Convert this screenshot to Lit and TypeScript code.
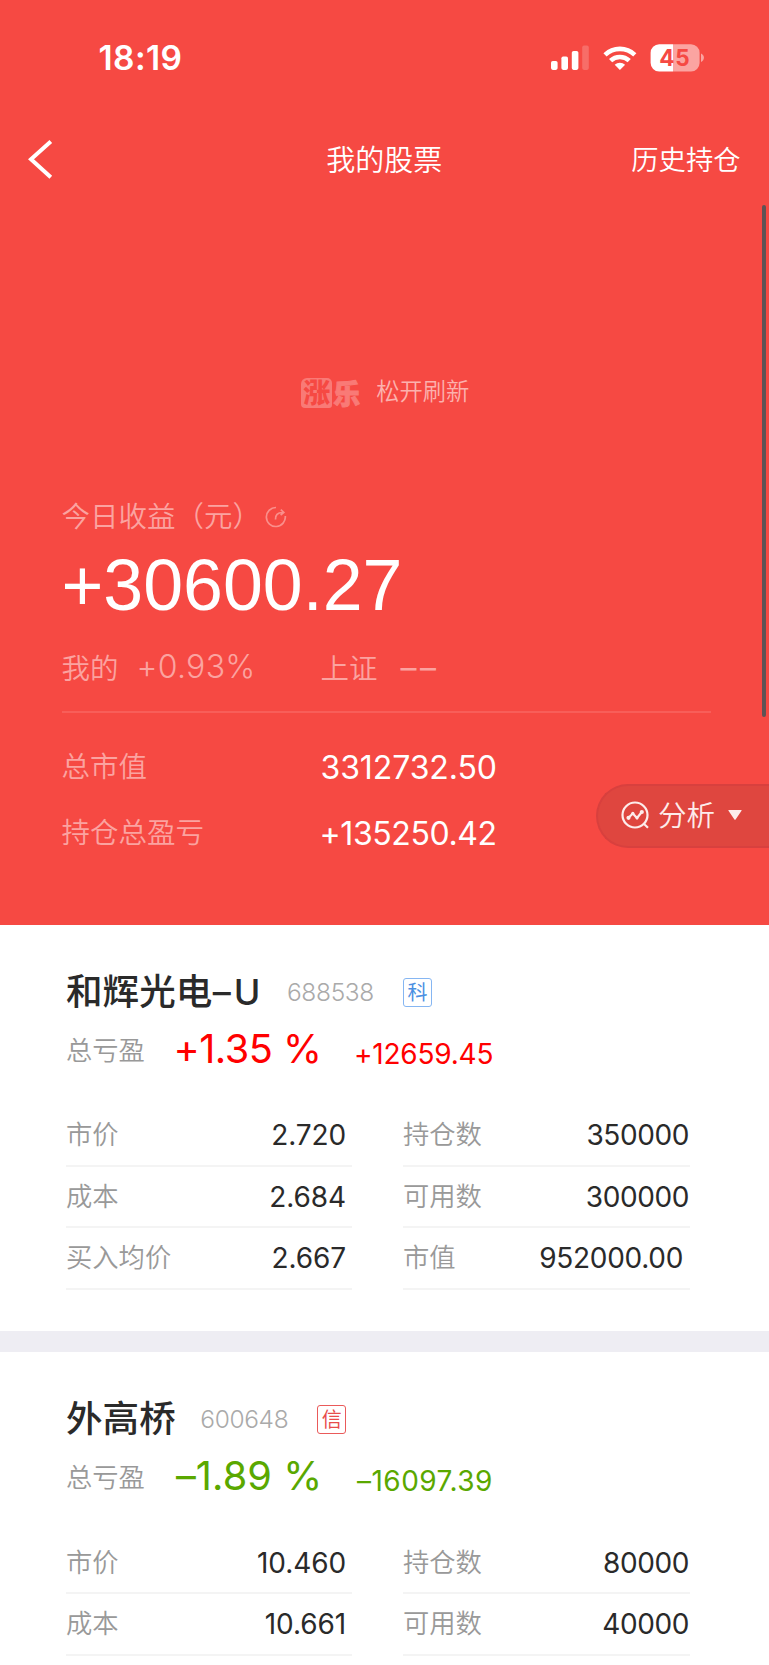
import { LitElement, html, css } from 'lit';
import { customElement, property } from 'lit/decorators.js';
import { classMap } from 'lit/directives/class-map.js';

interface Field {
  label: string;
  value: string;
  kind: 'price' | 'count' | 'money';
}

interface Holding {
  name: string;
  suffix?: string;
  code: string;
  tag: string;
  tagTone: 'blue' | 'red';
  rate: string;
  amount: string;
  up: boolean;
  fields: Field[];
}

const HOLDINGS: Holding[] = [
  {
    name: '和辉光电', suffix: '–U', code: '688538', tag: '科', tagTone: 'blue',
    rate: '+1.35 %', amount: '+12659.45', up: true,
    fields: [
      { label: '市价', value: '2.720', kind: 'price' },
      { label: '持仓数', value: '350000', kind: 'count' },
      { label: '成本', value: '2.684', kind: 'price' },
      { label: '可用数', value: '300000', kind: 'count' },
      { label: '买入均价', value: '2.667', kind: 'price' },
      { label: '市值', value: '952000.00', kind: 'money' },
    ],
  },
  {
    name: '外高桥', code: '600648', tag: '信', tagTone: 'red',
    rate: '–1.89 %', amount: '–16097.39', up: false,
    fields: [
      { label: '市价', value: '10.460', kind: 'price' },
      { label: '持仓数', value: '80000', kind: 'count' },
      { label: '成本', value: '10.661', kind: 'price' },
      { label: '可用数', value: '40000', kind: 'count' },
    ],
  },
];

@customElement('status-bar')
export class StatusBar extends LitElement {
  static styles = css`
    :host { display: flex; align-items: center; height: 115px; padding: 0 65px 0 98.5px; box-sizing: border-box; color: #fff; }
    .time { font: 600 33.5px/40px Inter, sans-serif; letter-spacing: 0.4px; }
    svg { display: block; margin-left: auto; }
    .level { font: 700 22.5px Inter, sans-serif; fill: #f64943; letter-spacing: 0.8px; }
  `;
  render() {
    return html`
      <span class="time">18:19</span>
      <svg width="153" height="28" viewBox="551 43.4 153 28" fill="#fff">
        <rect x="551" y="60.3" width="6.6" height="9" rx="1.8" />
        <rect x="561.4" y="55.8" width="6.6" height="13.5" rx="1.8" />
        <rect x="571.8" y="50.3" width="6.6" height="19" rx="1.8" />
        <rect x="582.2" y="45" width="6.6" height="24.3" rx="1.8" opacity=".2" />
        <g fill="none" stroke="#fff" stroke-width="4.6">
          <path d="M605 54.2a21.6 21.6 0 0 1 29.8 0" />
          <path d="M610.6 60.1a13.4 13.4 0 0 1 18.6 0" />
        </g>
        <path d="M619.9 69.4l-5.2-5.3a7.6 7.6 0 0 1 10.4 0z" />
        <clipPath id="shell"><rect x="650.6" y="43.6" width="49" height="27.4" rx="8.6" /></clipPath>
        <g clip-path="url(#shell)">
          <rect x="650" y="43" width="23" height="29" />
          <rect x="673" y="43" width="27" height="29" opacity=".5" />
        </g>
        <path d="M701 53c1.8.8 2.9 2.3 2.9 4.2s-1.1 3.5-2.9 4.2z" opacity=".5" />
        <text class="level" x="659.2" y="65.4">45</text>
      </svg>
    `;
  }
}

@customElement('nav-bar')
export class NavBar extends LitElement {
  static styles = css`
    :host { display: grid; grid-template-columns: 1fr auto 1fr; align-items: center; height: 85px; padding: 0 28.5px 0 28px; color: #fff;
      font-family: "Noto Sans CJK SC", sans-serif; font-weight: 350; }
    svg { display: block; margin: 3px 0 0 -1px; }
    .title { font-size: 29px; line-height: 40px; }
    .history { font-size: 27.3px; line-height: 40px; text-align: right; }
  `;
  render() {
    return html`
      <svg width="28" height="42" viewBox="27 138 28 42" fill="none" stroke="#fff" stroke-width="4">
        <path d="M50.8 141.4 31 159.2 50.8 177.2" />
      </svg>
      <span class="title">我的股票</span>
      <span class="history">历史持仓</span>
    `;
  }
}

@customElement('profit-panel')
export class ProfitPanel extends LitElement {
  static styles = css`
    :host { display: block; padding: 175px 58px 61px 61.5px; color: #fff; font: 350 28.5px/40px "Noto Sans CJK SC", sans-serif; }
    .refresh { display: flex; align-items: center; justify-content: center; gap: 15px; height: 30px; margin-left: -2px; font-size: 23.3px; color: #fcb1ae; }
    .logo { display: flex; align-items: center; gap: 1px; margin-top: 6px; font-weight: 900; line-height: 30px; }
    .seal { width: 31px; height: 30px; border-radius: 6px 5px 3px 4px; background: #f97a76; color: #f64943; font-size: 27px; line-height: 28px; text-align: center; }
    .script { width: 28px; color: #f97a76; font-size: 27px; line-height: 28px; -webkit-text-stroke: 1px #f97a76; }
    .today { display: flex; align-items: center; height: 40px; margin-top: 89.5px; color: #fba3a0; }
    .today svg { display: block; margin: 4px 0 0 3.5px; }
    .total { height: 72px; margin-top: 14px; font: 400 71.7px/72px "Liberation Sans", Arial, sans-serif; }
    .compare { display: grid; grid-template-columns: 259px 1fr; height: 40px; margin-top: 25.5px; padding-bottom: 25px;
      border-bottom: 2px solid #f85e59; color: #fba3a0; }
    .compare > div { display: flex; align-items: center; }
    .rate { margin-left: 18px; font: 300 32px/40px Inter, sans-serif; letter-spacing: 0.3px; }
    .none { margin-left: 23px; padding-top: 2px; font: 400 32px/40px Inter, sans-serif; letter-spacing: 3.4px; }
    .sums { display: grid; grid-template-columns: 259px 1fr; grid-auto-rows: 66px; align-items: center; margin-top: 18.5px; }
    .sums .label { color: #fba3a0; }
    .sums .value { padding-top: 7px; font: 400 32px/40px Inter, sans-serif; letter-spacing: -0.1px; }
    .sums .gain { letter-spacing: -0.4px; margin-left: -1px; }
  `;
  render() {
    return html`
      <div class="refresh">
        <div class="logo"><span class="seal">涨</span><span class="script">乐</span></div>
        <span>松开刷新</span>
      </div>
      <div class="today">
        <span>今日收益（元）</span>
        <svg width="22" height="22" viewBox="0 0 22 22" fill="none" stroke="#fa8f8b" stroke-width="1.7">
          <path d="M11 1.5A9.5 9.5 0 1 0 20.3 10" />
          <path d="M10.5 13.5c-.3-4.5 2-7 7-7M15.8 3.6l3 2.9-3.2 2.7" />
        </svg>
      </div>
      <div class="total">+30600.27</div>
      <div class="compare">
        <div><span>我的</span><span class="rate">+0.93%</span></div>
        <div><span>上证</span><span class="none">––</span></div>
      </div>
      <div class="sums">
        <span class="label">总市值</span><span class="value">3312732.50</span>
        <span class="label">持仓总盈亏</span><span class="value gain">+135250.42</span>
      </div>
    `;
  }
}

@customElement('analysis-pill')
export class AnalysisPill extends LitElement {
  static styles = css`
    :host { display: flex; align-items: center; box-sizing: border-box; width: 173px; height: 63.5px; padding-left: 23px;
      border: 2px solid #d8403e; border-right: 0; border-radius: 32px 0 0 32px; background: #df463f; color: #fdeceb;
      font: 350 28.5px/40px "Noto Sans CJK SC", sans-serif; }
    svg { display: block; }
    span { margin: -4px 13px 0 8px; }
    .chart { margin-top: -1px; }
    .caret { margin-top: -2px; }
  `;
  render() {
    return html`
      <svg class="chart" width="29" height="29" viewBox="0 0 29 29" fill="none" stroke="currentColor" stroke-width="2.2">
        <circle cx="14" cy="14" r="12.5" />
        <path d="M22.5 22.500l4.500 4.200" />
        <path d="M7.5 16.800l4.300-4.300 4.200 4.500 4.800-6" />
        <g fill="currentColor" stroke="none"><circle cx="7.500" cy="16.800" r="2.100" /><circle cx="11.800" cy="12.300" r="1.600" /><circle cx="16" cy="16.800" r="1.600" /><circle cx="20.800" cy="11" r="2.100" /></g>
      </svg>
      <span>分析</span>
      <svg class="caret" width="14" height="10" viewBox="0 0 14 10" fill="currentColor"><path d="M.8 0h12.400q.8 0 .3.700L7.600 9.500q-.6.700-1.200 0L.5.700Q0 0 .8 0z" /></svg>
    `;
  }
}

@customElement('holding-card')
export class HoldingCard extends LitElement {
  @property({ attribute: false }) holding!: Holding;

  static styles = css`
    :host { display: block; padding: 45.5px 79px 41px 66px; border-bottom: 21px solid #eeedf3; background: #fff; color: #2a2a2a;
      font-family: "Noto Sans CJK SC", sans-serif; }
    .head { display: flex; align-items: center; height: 44px; }
    .name { padding-bottom: 4px; font-size: 36.6px; line-height: 44px; font-weight: 500; }
    .suffix { margin: 0 -1px 0 0.5px; font: 500 36px/44px Inter, sans-serif; letter-spacing: 3px; }
    .code { margin-left: 24.5px; font: 300 24.5px/44px Inter, sans-serif; letter-spacing: -0.35px; color: #aaa; }
    .tag { display: grid; place-items: center; box-sizing: border-box; width: 29px; height: 29px; margin: 1px 0 0 29px; padding-bottom: 2px;
      border: 1px solid; border-radius: 3px; font-size: 20px; line-height: 24px; font-weight: 400; }
    .tag.blue { color: #4a90e2; border-color: #86b6f2; }
    .tag.red { color: #e84c4c; border-color: #ea5a5a; }
    .result { display: flex; align-items: center; height: 50px; margin-top: 10px; color: #5aa800; }
    .result.up { color: #f00; }
    .label { color: #999; font-size: 26.3px; line-height: 40px; font-weight: 350; }
    .rate { width: 178px; margin-left: 31px; font: 400 39.7px/50px Inter, sans-serif; letter-spacing: 0.1px; }
    .up .rate { width: 180.5px; margin-left: 28.5px; letter-spacing: -0.5px; }
    .amount { padding-top: 10px; font: 400 28px/40px Inter, sans-serif; letter-spacing: 0.5px; margin-left: 3px; }
    .up .amount { letter-spacing: -0.2px; margin-left: 0; }
    .fields { display: grid; grid-template-columns: 286px 287px; column-gap: 51px; grid-auto-rows: 61.4px; margin-top: 31.6px; }
    .field { display: flex; align-items: center; justify-content: space-between; border-bottom: 2px solid #f4f4f4; }
    .field .label { padding-bottom: 4px; }
    .value { font: 400 28px/40px Inter, sans-serif; }
    .price { padding-right: 6px; letter-spacing: -0.1px; }
    .count { padding-right: 1px; letter-spacing: -0.4px; }
    .money { padding-right: 7px; letter-spacing: -0.3px; }
  `;
  render() {
    const h = this.holding;
    return html`
      <div class="head">
        <span class="name">${h.name}</span>${h.suffix ? html`<span class="suffix">${h.suffix}</span>` : null}
        <span class="code">${h.code}</span>
        <span class=${classMap({ tag: true, [h.tagTone]: true })}>${h.tag}</span>
      </div>
      <div class=${classMap({ result: true, up: h.up })}>
        <span class="label">总亏盈</span><span class="rate">${h.rate}</span><span class="amount">${h.amount}</span>
      </div>
      <div class="fields">
        ${h.fields.map((f) => html`
          <div class="field"><span class="label">${f.label}</span><span class=${classMap({ value: true, [f.kind]: true })}>${f.value}</span></div>
        `)}
      </div>
    `;
  }
}

@customElement('app-root')
export class AppRoot extends LitElement {
  static styles = css`
    :host { display: block; position: relative; width: 769px; height: 1665px; overflow: hidden; background: #fff; }
    .hero { background: #f64943; }
    analysis-pill { position: absolute; right: 0; top: 784px; }
    .scroll { position: absolute; left: 762.3px; top: 205px; width: 4px; height: 512px; border-radius: 2px; background: #5f5355; }
  `;
  render() {
    return html`
      <div class="hero">
        <status-bar></status-bar>
        <nav-bar></nav-bar>
        <profit-panel></profit-panel>
      </div>
      ${HOLDINGS.map((h) => html`<holding-card .holding=${h}></holding-card>`)}
      <analysis-pill></analysis-pill>
      <div class="scroll"></div>
    `;
  }
}
